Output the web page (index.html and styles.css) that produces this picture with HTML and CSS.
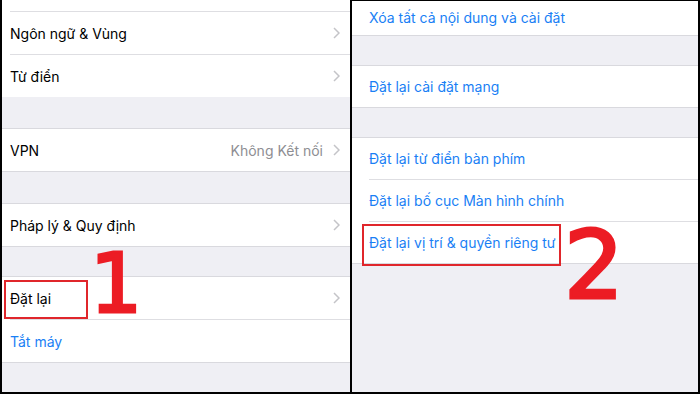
FILE: index.html
```html
<!DOCTYPE html>
<html lang="vi">
<head>
    <meta charset="UTF-8">
    <meta name="viewport" content="width=device-width, initial-scale=1.0">
    <title>Cài đặt chung</title>
    <link rel="stylesheet" href="styles.css">
</head>
<body>
    <div class="frame">
        <!-- màn hình bên trái -->
        <div class="panel panel-left">
            <div class="stub"></div>
            <div class="cell"><div class="cell-inner">
                <span class="label">Ngôn ngữ &amp; Vùng</span>
                <svg class="chev" width="7" height="12" viewBox="0 0 7 12"><polyline points="1,1 6,6 1,11" /></svg>
            </div></div>
            <div class="cell"><div class="cell-inner">
                <span class="label">Từ điển</span>
                <svg class="chev" width="7" height="12" viewBox="0 0 7 12"><polyline points="1,1 6,6 1,11" /></svg>
            </div></div>
            <div class="gap"></div>
            <div class="group">
                <div class="cell"><div class="cell-inner">
                    <span class="label">VPN</span>
                    <span class="detail">Không Kết nối</span>
                    <svg class="chev" width="7" height="12" viewBox="0 0 7 12"><polyline points="1,1 6,6 1,11" /></svg>
                </div></div>
            </div>
            <div class="gap"></div>
            <div class="group">
                <div class="cell"><div class="cell-inner">
                    <span class="label">Pháp lý &amp; Quy định</span>
                    <svg class="chev" width="7" height="12" viewBox="0 0 7 12"><polyline points="1,1 6,6 1,11" /></svg>
                </div></div>
            </div>
            <div class="gap gap-short"></div>
            <div class="group">
                <div class="cell"><div class="cell-inner">
                    <span class="label">Đặt lại</span>
                    <svg class="chev" width="7" height="12" viewBox="0 0 7 12"><polyline points="1,1 6,6 1,11" /></svg>
                </div></div>
                <div class="cell"><div class="cell-inner">
                    <span class="label link">Tắt máy</span>
                </div></div>
            </div>
            <div class="fill"></div>

            <div class="mark mark-1"></div>
            <span class="step step-1">1</span>
        </div>

        <!-- màn hình bên phải -->
        <div class="panel panel-right">
            <div class="group group-top">
                <div class="cell"><div class="cell-inner short">
                    <span class="label link">Xóa tất cả nội dung và cài đặt</span>
                </div></div>
            </div>
            <div class="gap"></div>
            <div class="group">
                <div class="cell"><div class="cell-inner">
                    <span class="label link">Đặt lại cài đặt mạng</span>
                </div></div>
            </div>
            <div class="gap"></div>
            <div class="group">
                <div class="cell"><div class="cell-inner">
                    <span class="label link">Đặt lại từ điển bàn phím</span>
                </div></div>
                <div class="cell"><div class="cell-inner">
                    <span class="label link">Đặt lại bố cục Màn hình chính</span>
                </div></div>
                <div class="cell"><div class="cell-inner">
                    <span class="label link">Đặt lại vị trí &amp; quyền riêng tư</span>
                </div></div>
            </div>
            <div class="fill"></div>

            <div class="mark mark-2"></div>
            <span class="step step-2">2</span>
        </div>
    </div>
</body>
</html>
```

FILE: styles.css
```css
* {
    box-sizing: border-box;
}
body {
    margin: 0;
    background: #000;
    font-family: "Inter", "Noto Sans", "DejaVu Sans", sans-serif;
}
.frame {
    width: 700px;
    height: 394px;
    display: flex;
    gap: 2px;
    padding: 0 2px 2px 2px;
    background: #000;
}
.panel {
    position: relative;
    display: flex;
    flex-direction: column;
    background: #efeff4;
    overflow: hidden;
}
.panel-left {
    width: 348px;
}
.panel-right {
    width: 346px;
    margin-top: 1px;
}
.stub {
    height: 11px;
    background: #fff;
}
.group {
    background: #fff;
    border-top: 1px solid #d9d9de;
    border-bottom: 1px solid #d9d9de;
}
.group-top {
    border-top: none;
}
.gap {
    height: 31px;
}
.gap-short {
    height: 29px;
}
.panel-right .gap {
    height: 29px;
}
.fill {
    flex: 1;
}
.cell {
    background: #fff;
    padding-left: 8px;
}
.panel-right .cell {
    padding-left: 17px;
}
.cell-inner {
    height: 43px;
    display: flex;
    align-items: center;
    border-top: 1px solid #dedee2;
    padding-right: 10px;
}
.group .cell:first-child .cell-inner {
    border-top: none;
    height: 42px;
}
.panel-right .group .cell-inner {
    height: 42px;
}
.panel-right .group .cell:first-child .cell-inner {
    height: 41px;
}
.panel-right .group .cell:first-child .cell-inner.short {
    height: 34px;
    padding-bottom: 2px;
}
.label {
    flex: 1;
    font-size: 14px;
    color: #000;
}
.link {
    color: #1a7ff5;
}
.detail {
    font-size: 14px;
    color: #8e8e93;
    margin-right: 10px;
}
.chev {
    fill: none;
    stroke: #c4c4c8;
    stroke-width: 1.5;
}
.mark {
    position: absolute;
    border: 2px solid #e0262b;
}
.mark-1 {
    left: 2px;
    top: 280px;
    width: 84px;
    height: 39px;
}
.mark-2 {
    left: 10px;
    top: 223px;
    width: 199px;
    height: 42px;
}
.step {
    position: absolute;
    font-family: "DejaVu Sans", sans-serif;
    color: #ec1c24;
    -webkit-text-stroke: 3px #ec1c24;
    line-height: 64px;
}
.step-1 {
    left: 88px;
    top: 252px;
    font-size: 82px;
}
.step-2 {
    left: 212px;
    top: 233px;
    font-size: 94px;
}
```
